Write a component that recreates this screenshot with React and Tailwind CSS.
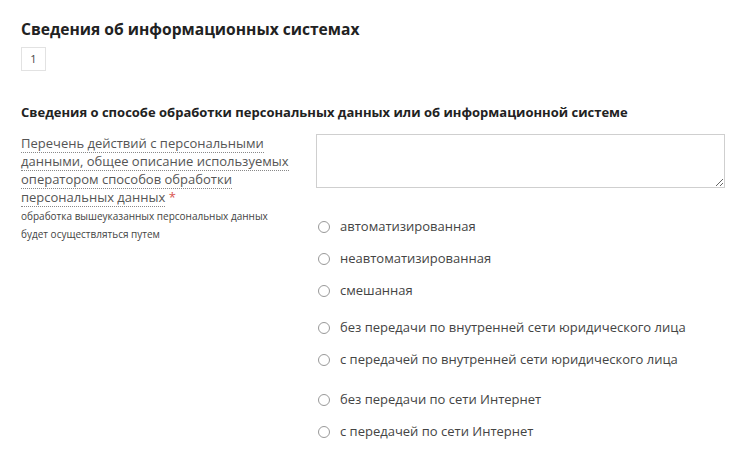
export default function App() {
  const groups = [
    ["автоматизированная", "неавтоматизированная", "смешанная"],
    ["без передачи по внутренней сети юридического лица", "с передачей по внутренней сети юридического лица"],
    ["без передачи по сети Интернет", "с передачей по сети Интернет"],
  ];
  return (
    <div className="w-[750px] h-[459px] bg-white overflow-hidden pl-[21px] pt-[17px]" style={{ fontFamily: '"Open Sans", sans-serif' }}>
      <h1 className="text-[15.6px] font-bold text-[#222] leading-[24px]">Сведения об информационных системах</h1>
      <div className="mt-[6px] w-[25px] h-[24px] border border-[#e2e2e2] flex items-center justify-center text-[11px] text-[#444]">1</div>
      <h2 className="mt-[32px] text-[13px] font-bold text-[#222] leading-[18px]">Сведения о способе обработки персональных данных или об информационной системе</h2>
      <div className="mt-[13px] flex">
        <div className="w-[295px] shrink-0">
          <div className="text-[13px] leading-[18px] text-[#555] pr-[20px]">
            <span className="border-b border-dotted border-[#888]">Перечень действий с персональными данными, общее описание используемых оператором способов обработки персональных данных</span>
            <span className="text-[#d9534f]">&nbsp;*</span>
          </div>
          <div className="text-[10px] leading-[18px] text-[#444] mt-[1px] w-[262px]">обработка вышеуказанных персональных данных будет осуществляться путем</div>
        </div>
        <div className="flex-1 pr-[25px]">
          <textarea className="block w-[409px] h-[54px] border border-[#cfcfcf] resize-y" />
          <div className="mt-[23px] flex flex-col">
            {groups.map((g, gi) => (
              <div key={gi} className={gi === 0 ? "" : gi === 1 ? "mt-[5px]" : "mt-[8px]"}>
                {g.map((t) => (
                  <label key={t} className="flex items-center h-[32px] text-[13px] text-[#444]">
                    <span className="ml-[2px] w-[12px] h-[12px] rounded-full border border-[#999] bg-white mr-[10px] shrink-0" />
                    {t}
                  </label>
                ))}
              </div>
            ))}
          </div>
        </div>
      </div>
    </div>
  );
}
